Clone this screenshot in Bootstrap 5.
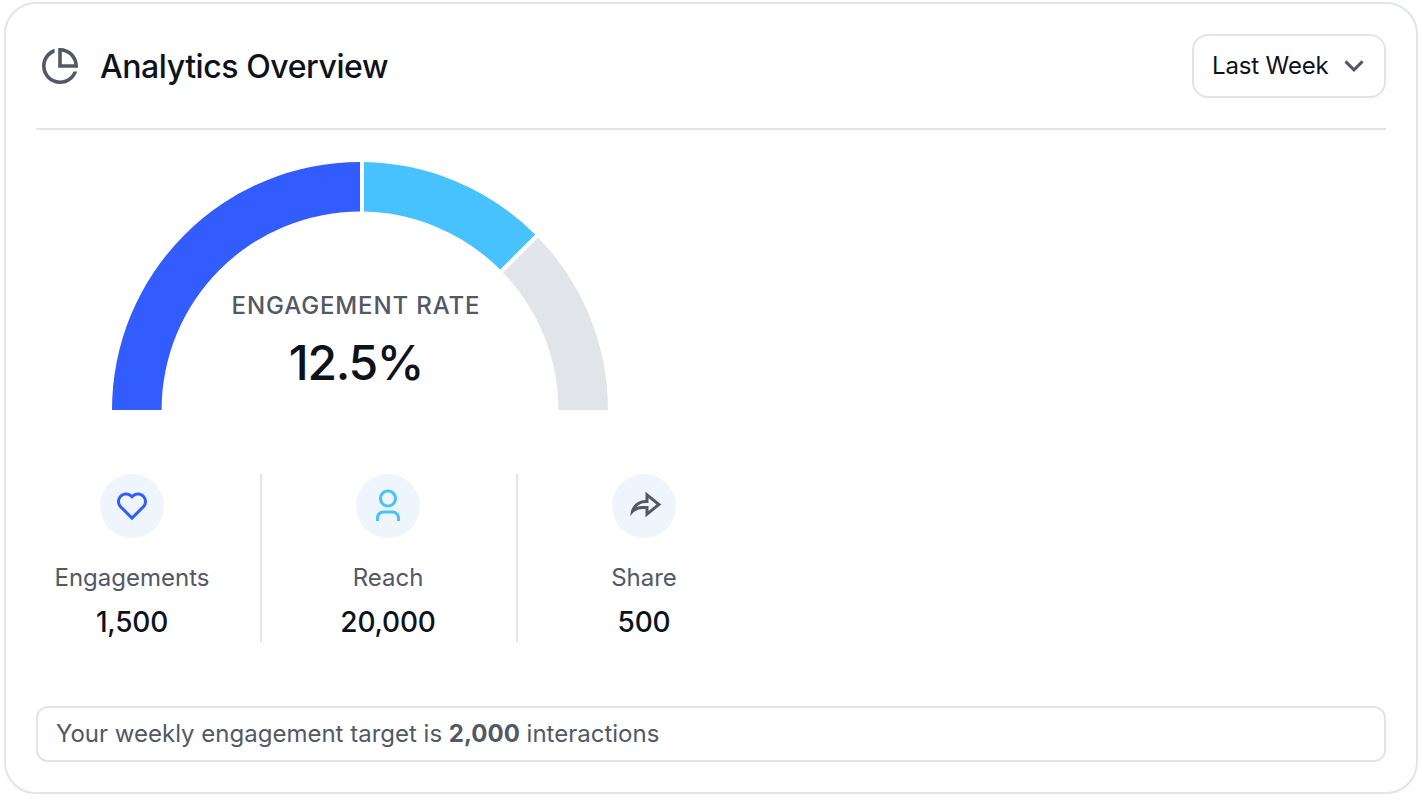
<!DOCTYPE html>
<html lang="en">
<head>
<meta charset="utf-8">
<meta name="viewport" content="width=device-width, initial-scale=1">
<title>Analytics Overview</title>
<link href="https://cdn.jsdelivr.net/npm/bootstrap@5.3.0/dist/css/bootstrap.min.css" rel="stylesheet">
<style>
:root { --ink: #0e121b; --sub: #525866; --line: #e1e5ea; --blue: #335cff; --sky: #47c2ff; }
body { font-family: Inter, "Liberation Sans", sans-serif; color: var(--ink); background: #fff; overflow: hidden; }
svg { display: block; flex: none; }
.panel { margin: 2px 4px 0; height: 792px; border: 2px solid var(--line); border-radius: 32px; padding: 30px; box-shadow: 0 2px 4px rgba(14,18,27,.02); }
.panel-head { height: 96px; border-bottom: 2px solid var(--line); padding: 0 0 30px; }
.panel-title { font-size: 32px; line-height: 48px; font-weight: 500; letter-spacing: -.43px; margin-left: 20px; padding-top: 2px; }
.title-row { height: 64px; padding-left: 4px; }
.period { width: 194px; height: 64px; border: 2px solid var(--line); border-radius: 16px; padding: 0 12px 0 18px; font-size: 24px; line-height: 32px; letter-spacing: -.14px; background: #fff; color: var(--ink); box-shadow: 0 2px 4px rgba(14,18,27,.02); }
.gauge { width: 496px; height: 248px; margin: 32px 0 0 76px; }
.gauge-text { left: -4px; bottom: 15px; }
.gauge-label { font-size: 24px; line-height: 32px; font-weight: 500; letter-spacing: .88px; color: var(--sub); }
.gauge-value { font-size: 48px; line-height: 64px; font-weight: 500; letter-spacing: -1.3px; margin-top: 9px; }
.stats { margin: 64px 0 0 -32px; height: 168px; width: 768px; }
.stat { width: 256px; position: relative; }
.stat + .stat::before { content: ""; position: absolute; left: 0; top: 0; bottom: 0; width: 2px; background: var(--line); }
.bubble { width: 64px; height: 64px; background: #eef5fd; }
.stat-name { font-size: 24px; line-height: 32px; color: var(--sub); margin-top: 24px; }
.stat-value { font-size: 28px; line-height: 40px; font-weight: 500; letter-spacing: -.2px; margin-top: 8px; }
.target-note { height: 56px; margin-top: 64px; border: 2px solid var(--line); border-radius: 12px; padding: 0 18px; font-size: 24px; color: var(--sub); box-shadow: 0 2px 4px rgba(14,18,27,.02); }
</style>
</head>
<body>
<main class="panel">
  <header class="panel-head d-flex align-items-start justify-content-between">
    <div class="title-row d-flex align-items-center">
      <svg width="40" height="40" viewBox="0.889 0.889 22.222 22.222" fill="#525866"><path d="M9 2.4578V4.58152C6.06817 5.76829 4 8.64262 4 12C4 16.4183 7.58172 20 12 20C15.3574 20 18.2317 17.9318 19.4185 15H21.5422C20.2679 19.0571 16.4776 22 12 22C6.47715 22 2 17.5228 2 12C2 7.52236 4.94289 3.73207 9 2.4578ZM12 2C17.5228 2 22 6.47715 22 12C22 12.3375 21.9833 12.6711 21.9506 13H11V2.04938C11.3289 2.01672 11.6625 2 12 2ZM13 4.06189V11H19.9381C19.4869 7.38128 16.6187 4.51314 13 4.06189Z"/></svg>
      <h1 class="panel-title mb-0">Analytics Overview</h1>
    </div>
    <button type="button" class="period d-flex align-items-center justify-content-between">
      <span class="period-name">Last Week</span>
      <svg width="36" height="36" viewBox="0 0 24 24" fill="#525866"><path d="M11.9999 13.1714L16.9497 8.22168L18.3639 9.63589L11.9999 15.9999L5.63599 9.63589L7.0502 8.22168L11.9999 13.1714Z"/></svg>
    </button>
  </header>

  <section class="gauge position-relative">
    <svg width="496" height="248" viewBox="0 0 496 248">
      <path fill="#335cff" d="M0 248A248 248 0 0 1 248 0V49.6A198.4 198.4 0 0 0 49.6 248Z"/>
      <path fill="#47c2ff" d="M248 0A248 248 0 0 1 423.36 72.64L388.29 107.71A198.4 198.4 0 0 0 248 49.6Z"/>
      <path fill="#e1e5ea" d="M423.36 72.64A248 248 0 0 1 496 248H446.4A198.4 198.4 0 0 0 388.29 107.71Z"/>
      <path stroke="#fff" stroke-width="4" d="M250 -2V60M430 68.83L380 118.83"/>
    </svg>
    <div class="gauge-text position-absolute w-100 text-center">
      <div class="gauge-label">ENGAGEMENT RATE</div>
      <div class="gauge-value">12.5%</div>
    </div>
  </section>

  <section class="stats d-flex">
    <div class="stat d-flex flex-column align-items-center">
      <div class="bubble rounded-circle d-flex align-items-center justify-content-center">
        <svg width="36" height="36" viewBox="0 0 24 24" fill="#335cff"><path d="M12.001 4.52853C14.35 2.42 17.98 2.49 20.2426 4.75736C22.5053 7.02472 22.583 10.637 20.4786 12.993L11.9999 21.485L3.52138 12.993C1.41705 10.637 1.49571 7.01901 3.75736 4.75736C6.02157 2.49315 9.64519 2.41687 12.001 4.52853ZM18.827 6.1701C17.3279 4.66794 14.9076 4.60701 13.337 6.01687L12.0019 7.21524L10.6661 6.01781C9.09098 4.60597 6.67506 4.66808 5.17157 6.17157C3.68183 7.66131 3.60704 10.0473 4.97993 11.6232L11.9999 18.6543L19.0201 11.6232C20.3935 10.0467 20.319 7.66525 18.827 6.1701Z"/></svg>
      </div>
      <div class="stat-name">Engagements</div>
      <div class="stat-value">1,500</div>
    </div>
    <div class="stat d-flex flex-column align-items-center">
      <div class="bubble rounded-circle d-flex align-items-center justify-content-center">
        <svg width="36" height="36" viewBox="0 0 24 24" fill="#47c2ff"><path d="M20 22H18V20C18 18.3431 16.6569 17 15 17H9C7.34315 17 6 18.3431 6 20V22H4V20C4 17.2386 6.23858 15 9 15H15C17.7614 15 20 17.2386 20 20V22ZM12 13C8.68629 13 6 10.3137 6 7C6 3.68629 8.68629 1 12 1C15.3137 1 18 3.68629 18 7C18 10.3137 15.3137 13 12 13ZM12 11C14.2091 11 16 9.20914 16 7C16 4.79086 14.2091 3 12 3C9.79086 3 8 4.79086 8 7C8 9.20914 9.79086 11 12 11Z"/></svg>
      </div>
      <div class="stat-name">Reach</div>
      <div class="stat-value">20,000</div>
    </div>
    <div class="stat d-flex flex-column align-items-center">
      <div class="bubble rounded-circle d-flex align-items-center justify-content-center">
        <svg width="36" height="36" viewBox="0 0 24 24" fill="#525866"><path d="M13 14H11C7.54202 14 4.53953 15.9502 3.03239 18.8107C3.01093 18.5433 3 18.2729 3 18C3 12.4772 7.47715 8 13 8V2.5L23.5 11L13 19.5V14ZM11 12H15V15.3078L20.3214 11L15 6.69224V10H13C10.5795 10 8.41011 11.0749 6.94312 12.7735C8.20873 12.2714 9.58041 12 11 12Z"/></svg>
      </div>
      <div class="stat-name">Share</div>
      <div class="stat-value">500</div>
    </div>
  </section>

  <div class="target-note d-flex align-items-center"><span>Your weekly engagement target is <strong>2,000</strong> interactions</span></div>
</main>
<script src="https://cdn.jsdelivr.net/npm/bootstrap@5.3.0/dist/js/bootstrap.bundle.min.js"></script>
</body>
</html>
